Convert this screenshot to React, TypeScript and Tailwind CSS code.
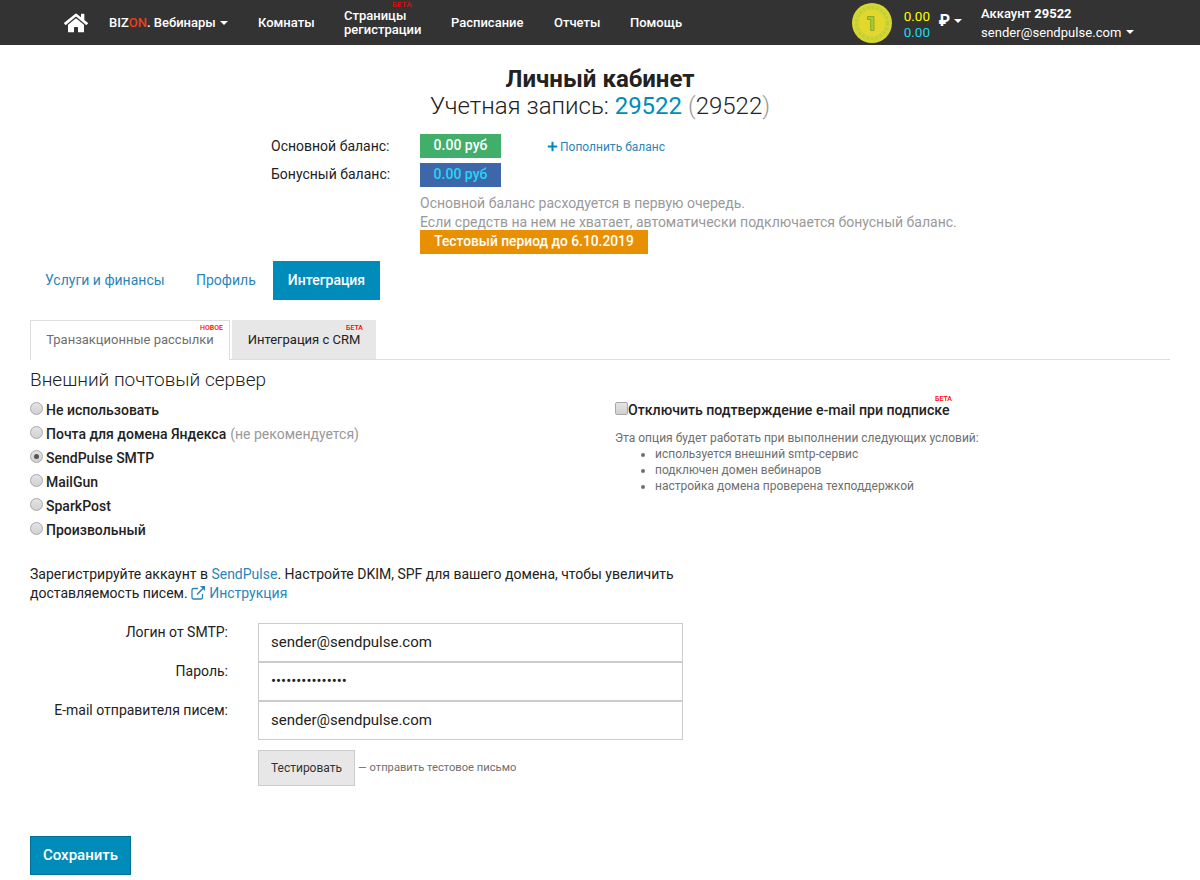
import React from "react";
import { FaHome, FaPlus } from "react-icons/fa";

function Caret({ className = "" }: { className?: string }) {
  return <span className={`inline-block w-0 h-0 border-x-[4px] border-x-transparent border-t-[4px] border-t-white ${className}`} />;
}

function Radio({ checked, label, note }: { checked?: boolean; label: string; note?: string }) {
  return (
    <label className="flex items-center h-6 text-[14px] font-medium text-[#222]">
      <span className="relative w-[13px] h-[13px] mr-[3px] -mt-[3px] rounded-full border border-[#a9a9a9] bg-linear-to-b from-[#e4e4e4] to-[#d0d0d0] flex items-center justify-center">
        {checked && <span className="w-[5px] h-[5px] rounded-full bg-[#555]" />}
      </span>
      {label}
      {note && <span className="ml-1 font-normal text-[#999]">{note}</span>}
    </label>
  );
}

function Field({ label, value, type = "text" }: { label: string; value: string; type?: string }) {
  return (
    <div className="flex h-[39px]">
      <div className="w-[228px] pr-[30px] text-right text-[14px] text-[#222] pt-[1px] leading-[16px] whitespace-nowrap">{label}</div>
      <input
        readOnly
        type={type}
        value={value}
        className="w-[425px] h-[39px] border border-[#ccc] bg-white pl-3 pb-[2px] text-[15px] text-[#222] font-['Roboto',sans-serif] outline-none"
      />
    </div>
  );
}

function Coin() {
  return (
    <svg width="40" height="40" viewBox="0 0 40 40">
      <circle cx="20" cy="20" r="20" fill="#d8d62e" />
      <circle cx="20" cy="20" r="15.5" fill="none" stroke="#bdd23a" strokeWidth="3.5" strokeDasharray="3 1.5" />
      <circle cx="20" cy="20" r="13" fill="#e3d62d" />
      <path d="M15.5 13.5h6.5v14h-3.4V16.5h-3.1z" fill="#a5cc30" stroke="#7f9f28" strokeWidth="0.8" />
    </svg>
  );
}

function LinkIcon() {
  return (
    <svg viewBox="0 0 15 15" className="inline-block w-[15px] h-[15px] -mt-[3px] mr-[3px]" fill="none" stroke="currentColor">
      <path d="M7 3.5H2.5a1.5 1.5 0 0 0-1.5 1.5v7.5a1.5 1.5 0 0 0 1.5 1.5H10a1.5 1.5 0 0 0 1.5-1.5V9" strokeWidth="1.3" />
      <path d="M6 9.5 12 3.5" strokeWidth="1.6" />
      <path d="M9 1h5v5z" fill="currentColor" stroke="none" />
    </svg>
  );
}

export default function App() {
  return (
    <div className="min-h-[880px] bg-white text-[#222] font-['Roboto',sans-serif] overflow-hidden">
      <header className="h-[45px] bg-[#333] flex items-center text-white text-[13px] font-medium relative">
        <FaHome className="ml-[64px] text-[24px] mt-[1px]" />
        <div className="ml-[21px] flex items-center w-[149px]">
          BIZ<span className="text-[#ed3e1c]">ON</span>. Вебинары
          <Caret className="ml-[4px]" />
        </div>
        <div className="w-[86px]">Комнаты</div>
        <div className="relative w-[107px] leading-[14px] mt-[1px]">
          <div>Страницы</div>
          <div>регистрации</div>
          <span className="absolute left-[48px] -top-[9px] text-[8px] leading-[10px] font-normal text-[#f00]">БЕТА</span>
        </div>
        <div className="w-[103px]">Расписание</div>
        <div className="w-[76px]">Отчеты</div>
        <div>Помощь</div>
        <div className="ml-auto flex items-center">
          <Coin />
          <div className="ml-[12px] w-[35px] text-[13.5px] leading-[16px] mt-[3px] font-normal">
            <div className="text-[#ffff00]">0.00</div>
            <div className="text-[#22d8f2]">0.00</div>
          </div>
          <span className="font-bold text-[16px] leading-[16px] -mt-[3px]">₽</span>
          <Caret className="ml-[4px] -mt-[3px]" />
          <div className="ml-[19px] mr-[73px] w-[146px] leading-[19px] text-[13px] font-normal">
            <div className="font-medium">Аккаунт <b className="font-bold">29522</b></div>
            <div className="flex items-center tracking-[0.05px]">sender@sendpulse.com<Caret className="ml-[5px]" /></div>
          </div>
        </div>
      </header>

      <main className="px-[30px]">
        <div className="text-center pt-[20px]">
          <h1 className="text-[24px] leading-[28px] font-bold text-[#222]">Личный кабинет</h1>
          <div className="text-[24px] leading-[26px] font-light text-[#222]">
            Учетная запись: <span className="text-[#008cba] font-normal">29522</span> <span className="text-[#999]">(</span>29522<span className="text-[#999]">)</span>
          </div>
        </div>

        <div className="mt-[15px] pl-[241px] text-[14px] font-light">
          <div className="flex items-center h-[24px]">
            <div className="w-[149px] text-[#222] font-normal pt-[1px]">Основной баланс:</div>
            <div className="w-[81px] h-[24px] bg-[#41ae6a] text-white text-center leading-[23px] font-medium">0.00 руб</div>
            <a className="ml-[46px] text-[12px] font-normal text-[#2a86b8] flex items-center gap-[2px] pt-[1px]"><FaPlus className="text-[11px] text-[#008cba]" />Пополнить баланс</a>
          </div>
          <div className="flex items-center h-[24px] mt-[5px]">
            <div className="w-[149px] text-[#222] font-normal -mt-[1px]">Бонусный баланс:</div>
            <div className="w-[81px] h-[24px] bg-[#3d66ab] text-[#22d8f2] text-center leading-[23px] font-medium">0.00 руб</div>
          </div>
          <div className="ml-[149px] mt-[7px] text-[#999] font-normal leading-[19px]">
            <div>Основной баланс расходуется в первую очередь.</div>
            <div>Если средств на нем не хватает, автоматически подключается бонусный баланс.</div>
            <div className="w-[228px] h-[24px] bg-[#e99002] text-white text-center text-[13.8px] leading-[22px] font-medium mt-[-2px]">Тестовый период до 6.10.2019</div>
          </div>
        </div>

        <nav className="mt-[7px] flex h-[39px] text-[14px] items-stretch text-[#2a86b8]">
          <a className="pl-[15px] w-[166px] flex items-center">Услуги и финансы</a>
          <a className="w-[77px] flex items-center">Профиль</a>
          <a className="w-[107px] bg-[#008cba] text-white font-medium flex items-center justify-center">Интеграция</a>
        </nav>

        <div className="mt-[20px] flex h-[40px] border-b border-[#ddd] text-[13px]">
          <div className="relative w-[200px] h-[40px] border border-b-0 border-[#ddd] bg-white text-[#6f6f6f] flex items-center justify-center pb-[2px]">
            Транзакционные рассылки
            <span className="absolute right-[6px] top-[3px] text-[7px] leading-[9px] font-medium text-[#f00]">НОВОЕ</span>
          </div>
          <div className="relative ml-[2px] w-[144px] h-[39px] bg-[#e7e7e7] text-[#222] flex items-center justify-center">
            Интеграция с CRM
            <span className="absolute right-[13px] top-[4px] text-[7px] leading-[9px] font-medium text-[#f00]">БЕТА</span>
          </div>
        </div>

        <h2 className="mt-[8px] text-[19px] leading-[24px] font-light text-[#222]">Внешний почтовый сервер</h2>

        <div className="flex mt-[6px]">
          <div className="w-[585px]">
            <Radio label="Не использовать" />
            <Radio label="Почта для домена Яндекса" note="(не рекомендуется)" />
            <Radio checked label="SendPulse SMTP" />
            <Radio label="MailGun" />
            <Radio label="SparkPost" />
            <Radio label="Произвольный" />
          </div>
          <div>
            <div className="relative flex items-center h-6 text-[14.13px] font-medium">
              <span className="w-[13px] h-[13px] rounded-[2px] border border-[#a9a9a9] bg-linear-to-b from-[#e4e4e4] to-[#d0d0d0] -mt-[3px]" />
              <span className="pt-[2px]">Отключить подтверждение e-mail при подписке</span>
              <span className="absolute left-[320px] -top-[3px] text-[7px] leading-[9px] font-medium text-[#f00]">БЕТА</span>
            </div>
            <div className="mt-[8px] text-[12px] leading-[16px] text-[#6f6f6f]">
              <div>Эта опция будет работать при выполнении следующих условий:</div>
              <ul className="list-disc pl-[40px]">
                <li>используется внешний smtp-сервис</li>
                <li>подключен домен вебинаров</li>
                <li>настройка домена проверена техподдержкой</li>
              </ul>
            </div>
          </div>
        </div>

        <p className="mt-[23px] w-[670px] text-[14px] leading-[19px] text-[#222]">
          Зарегистрируйте аккаунт в <a className="text-[#2a86b8]">SendPulse</a>. Настройте DKIM, SPF для вашего домена, чтобы увеличить доставляемость писем.{" "}
          <a className="text-[#2a86b8]"><LinkIcon />Инструкция</a>
        </p>

        <div className="mt-[20px]">
          <Field label="Логин от SMTP:" value="sender@sendpulse.com" />
          <Field label="Пароль:" value="123456789012345" type="password" />
          <Field label="E-mail отправителя писем:" value="sender@sendpulse.com" />
        </div>

        <div className="mt-[10px] ml-[228px] flex items-center">
          <button className="w-[97px] h-[36px] bg-[#e7e7e7] border border-[#ccc] text-[12px] text-[#333]">Тестировать</button>
          <span className="ml-[3px] text-[11.2px] text-[#6f6f6f]">— отправить тестовое письмо</span>
        </div>

        <button className="block mt-[50px] w-[101px] h-[39px] bg-[#008cba] border border-[#007095] text-white text-[15px] font-medium">Сохранить</button>
      </main>
    </div>
  );
}
